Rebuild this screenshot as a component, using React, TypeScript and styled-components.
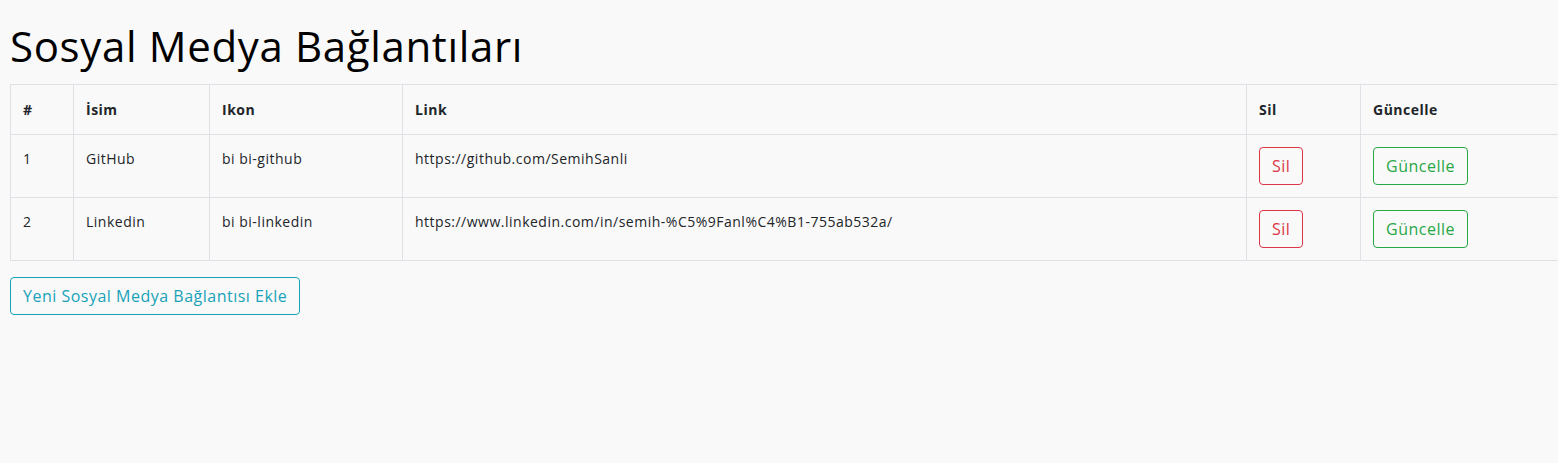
import React from "react";
import styled, { createGlobalStyle } from "styled-components";

const Global = createGlobalStyle`
  html, body { margin: 0; padding: 0; background: #f9f9f9; overflow: hidden; }
  body { font-family: "Open Sans", "Liberation Sans", sans-serif; color: #212529; }
`;

const Page = styled.div`
  padding: 22px 0 0 10px;
  overflow: hidden;
`;

const Title = styled.h1`
  margin: 0 0 14px;
  font-size: 42px;
  line-height: 48px;
  font-weight: 400;
  letter-spacing: 0.65px;
  color: #000;
`;

const Table = styled.table`
  width: 1560px;
  border-collapse: collapse;
  table-layout: fixed;
  font-size: 14px;
  letter-spacing: 0.5px;
`;

const HeadCell = styled.th<{ $w?: number }>`
  width: ${(p) => (p.$w ? `${p.$w - 25}px` : "auto")};
  border: 1px solid #dee2e6;
  padding: 0 12px;
  height: 49px;
  text-align: left;
  font-weight: 700;
  vertical-align: middle;
  color: #212529;
`;

const Cell = styled.td`
  border: 1px solid #dee2e6;
  padding: 12px;
  line-height: 24px;
  vertical-align: top;
  height: 38px;
`;

const OutlineButton = styled.button<{ $color: string }>`
  font-family: inherit;
  font-size: 16px;
  line-height: 24px;
  letter-spacing: 0.5px;
  padding: 6px 12px;
  background: transparent;
  color: ${(p) => p.$color};
  border: 1px solid ${(p) => p.$color};
  border-radius: 4px;
  cursor: pointer;
  display: inline-block;
`;

const Footer = styled.div`
  margin-top: 16px;
`;

const rows = [
  { id: 1, name: "GitHub", icon: "bi bi-github", link: "https://github.com/SemihSanli" },
  {
    id: 2,
    name: "Linkedin",
    icon: "bi bi-linkedin",
    link: "https://www.linkedin.com/in/semih-%C5%9Fanl%C4%B1-755ab532a/",
  },
];

export default function App() {
  return (
    <Page>
      <Global />
      <Title>Sosyal Medya Bağlantıları</Title>
      <Table>
        <thead>
          <tr>
            <HeadCell $w={63}>#</HeadCell>
            <HeadCell $w={136}>İsim</HeadCell>
            <HeadCell $w={193}>Ikon</HeadCell>
            <HeadCell $w={844}>Link</HeadCell>
            <HeadCell $w={114}>Sil</HeadCell>
            <HeadCell>Güncelle</HeadCell>
          </tr>
        </thead>
        <tbody>
          {rows.map((r) => (
            <tr key={r.id}>
              <Cell>{r.id}</Cell>
              <Cell>{r.name}</Cell>
              <Cell>{r.icon}</Cell>
              <Cell>{r.link}</Cell>
              <Cell>
                <OutlineButton $color="#dc3545">Sil</OutlineButton>
              </Cell>
              <Cell>
                <OutlineButton $color="#28a745">Güncelle</OutlineButton>
              </Cell>
            </tr>
          ))}
        </tbody>
      </Table>
      <Footer>
        <OutlineButton $color="#17a2b8">Yeni Sosyal Medya Bağlantısı Ekle</OutlineButton>
      </Footer>
    </Page>
  );
}
